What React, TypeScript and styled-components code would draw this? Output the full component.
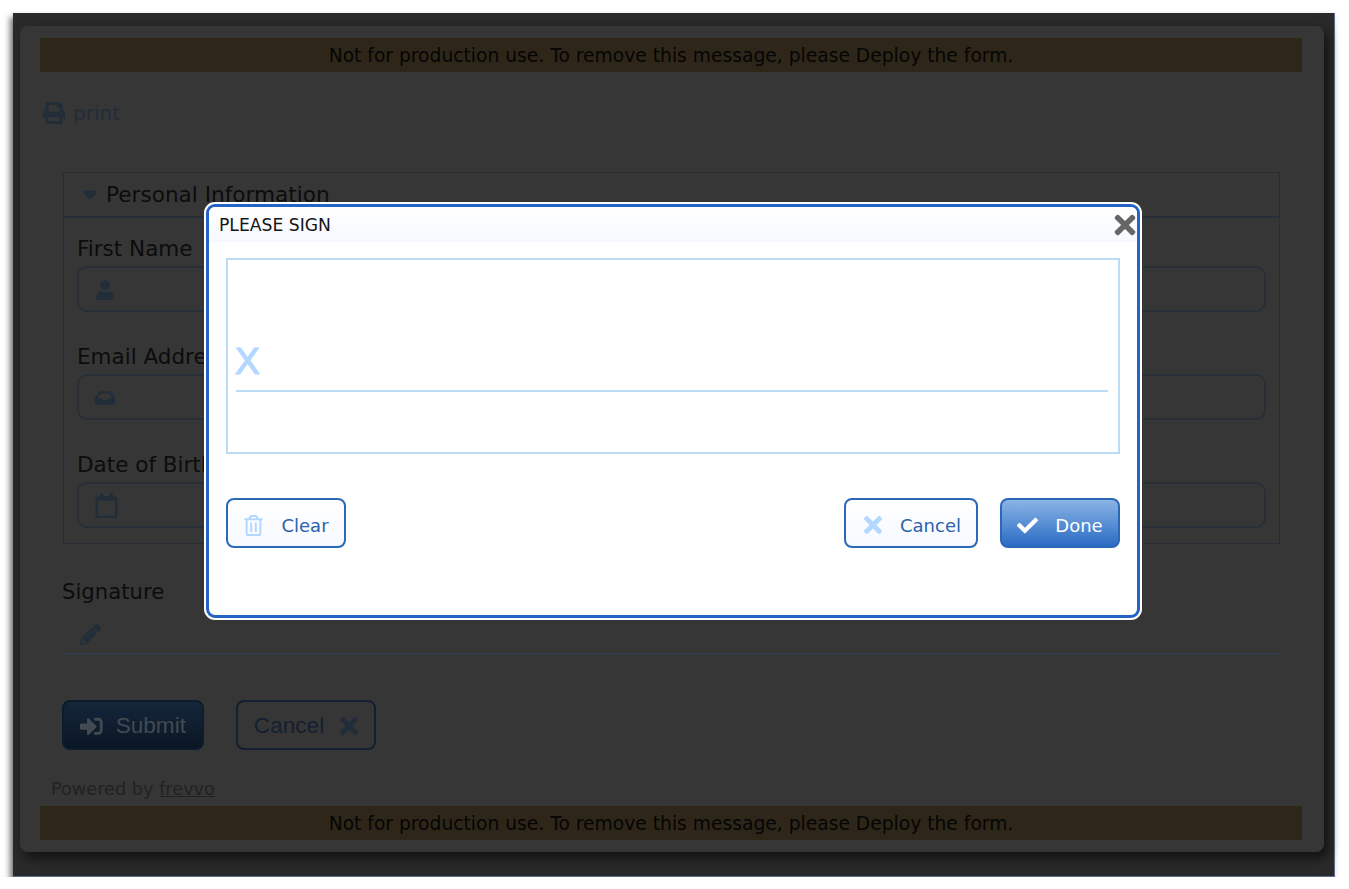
import React from "react";
import styled, { createGlobalStyle } from "styled-components";
import {
  FaCaretDown,
  FaCheck,
  FaInbox,
  FaPencilAlt,
  FaPrint,
  FaRegCalendar,
  FaRegTrashAlt,
  FaSignInAlt,
  FaTimes,
  FaUser,
} from "react-icons/fa";

const UI_FONT = `"DejaVu Sans", "Noto Sans", sans-serif`;
const ARIAL = `"Liberation Sans", Arial, sans-serif`;

const GlobalStyle = createGlobalStyle`
  html, body {
    margin: 0;
    background: #fff;
    font-family: ${UI_FONT};
  }
`;

const S = {
  Window: styled.div`
    position: relative;
    box-sizing: border-box;
    width: 1322px;
    height: 864px;
    margin: 13px 0 0 13px;
    padding: 13px 10px 25px 7px;
    background: #2a2a2a;
    border-right: 1px solid #5b6f8c;
    border-bottom: 1px solid #5b6f8c;
    box-shadow: -3px 4px 6px rgba(0, 0, 0, 0.55);
  `,
  Card: styled.div`
    box-sizing: border-box;
    height: 826px;
    padding: 12px 22px 12px 20px;
    background: #363636;
    border-radius: 8px;
    box-shadow: 4px 6px 12px rgba(0, 0, 0, 0.6);
    display: flex;
    flex-direction: column;
  `,
  Banner: styled.div`
    flex: 0 0 34px;
    display: flex;
    align-items: center;
    justify-content: center;
    background: #2e2719;
    color: #050505;
    font-size: 18.7px;
  `,
  PrintLink: styled.div`
    display: flex;
    align-items: center;
    gap: 8px;
    height: 30px;
    margin: 26px 0 0 3px;
    color: #222d3a;
    font-size: 20px;
    svg {
      font-size: 22px;
    }
  `,
  Section: styled.div`
    box-sizing: border-box;
    height: 373px;
    margin: 44px 22px 0 23px;
    border: 1px solid #262d35;
  `,
  SectionHead: styled.div`
    display: flex;
    align-items: center;
    gap: 8px;
    height: 43px;
    padding-left: 18px;
    border-bottom: 2px solid #282e35;
    color: #0c0c0c;
    font-size: 21.6px;
    svg {
      margin: 0 -5px;
      color: #222d3a;
      font-size: 26px;
    }
  `,
  SectionBody: styled.div`
    padding: 16px 13px 0 13px;
    display: flex;
    flex-direction: column;
    gap: 30px;
  `,
  Field: styled.div`
    display: flex;
    flex-direction: column;
    gap: 4px;
  `,
  Label: styled.label`
    height: 28px;
    line-height: 30px;
    color: #0c0c0c;
    font-size: 21.5px;
  `,
  Input: styled.div<{ $iconSize: number }>`
    box-sizing: border-box;
    height: 46px;
    padding: 2px 0 0 ${({ $iconSize }) => 21 - $iconSize * 0.25}px;
    display: flex;
    align-items: center;
    border: 2px solid #282f37;
    border-radius: 10px;
    color: #222d3a;
    font-size: ${({ $iconSize }) => $iconSize}px;
  `,
  Signature: styled.div`
    margin: 33px 22px 0 22px;
  `,
  SignatureLabel: styled.div`
    height: 30px;
    line-height: 30px;
    color: #0c0c0c;
    font-size: 21.2px;
  `,
  SignatureLine: styled.div`
    box-sizing: border-box;
    height: 47px;
    padding: 8px 0 0 18px;
    display: flex;
    align-items: center;
    border-bottom: 1px solid #2f4255;
    color: #222d3a;
    font-size: 21px;
  `,
  Actions: styled.div`
    display: flex;
    gap: 32px;
    margin: 46px 0 0 22px;
  `,
  SubmitButton: styled.div`
    box-sizing: border-box;
    width: 142px;
    height: 50px;
    padding-top: 2px;
    display: flex;
    align-items: center;
    justify-content: center;
    gap: 13px;
    border: 2px solid #0d1c2c;
    border-radius: 8px;
    background: linear-gradient(#15263a, #0a1624);
    color: #444a52;
    font-family: ${ARIAL};
    font-size: 22.6px;
  `,
  CancelButton: styled.div`
    box-sizing: border-box;
    width: 140px;
    height: 50px;
    padding: 2px 0 0 4px;
    display: flex;
    align-items: center;
    justify-content: center;
    gap: 12px;
    border: 2px solid #141f30;
    border-radius: 8px;
    color: #141f30;
    font-family: ${ARIAL};
    font-size: 22.6px;
    svg {
      color: #222d3a;
      font-size: 26px;
    }
  `,
  Powered: styled.div`
    height: 22px;
    margin: 28px 0 6px 11px;
    line-height: 22px;
    color: #222;
    font-size: 17.7px;
    a {
      color: inherit;
      text-decoration: underline;
    }
  `,
  Dialog: styled.div`
    position: absolute;
    left: 193px;
    top: 191px;
    box-sizing: border-box;
    width: 934px;
    height: 414px;
    background: #fff;
    border: 3px solid #2563c4;
    border-radius: 9px;
    box-shadow: 0 0 0 2px #fff;
    display: flex;
    flex-direction: column;
  `,
  TitleBar: styled.div`
    flex: 0 0 35px;
    box-sizing: border-box;
    position: relative;
    display: flex;
    align-items: center;
    padding: 1px 0 0 10px;
    background: linear-gradient(#fff, #f5f8fe);
    border-radius: 6px 6px 0 0;
    color: #151515;
    font-size: 17.2px;
  `,
  CloseIcon: styled.div`
    position: absolute;
    right: -3px;
    top: 3px;
    display: flex;
    color: #666;
    font-size: 30px;
  `,
  DialogBody: styled.div`
    padding: 16px 17px 0 17px;
    display: flex;
    flex-direction: column;
  `,
  Pad: styled.div`
    box-sizing: border-box;
    height: 196px;
    padding: 0 10px 0 8px;
    border: 2px solid #bcdcf6;
  `,
  PadMark: styled.div`
    box-sizing: border-box;
    height: 132px;
    padding-bottom: 3px;
    display: flex;
    align-items: flex-end;
    border-bottom: 2px solid #bcdcf6;
    color: #b3d7ff;
    font-family: ${ARIAL};
    font-size: 37px;
    line-height: 50px;
    -webkit-text-stroke: 1.2px #b3d7ff;
    text-indent: -1px;
  `,
  DialogActions: styled.div`
    display: flex;
    margin-top: 44px;
    gap: 22px;
  `,
  DialogButton: styled.div<{ $width: number; $primary?: boolean; $push?: boolean }>`
    box-sizing: border-box;
    width: ${({ $width }) => $width}px;
    height: 50px;
    margin-left: ${({ $push }) => ($push ? "auto" : "0")};
    padding-top: 4px;
    display: flex;
    align-items: center;
    justify-content: center;
    gap: 17px;
    border: 2px solid #2b68b5;
    border-radius: 8px;
    background: ${({ $primary }) =>
      $primary
        ? "linear-gradient(#8ab4e6, #2b6cc4)"
        : "linear-gradient(#fff, #f6f9ff)"};
    color: ${({ $primary }) => ($primary ? "#fff" : "#2b62ad")};
    font-size: 18px;
    svg {
      color: ${({ $primary }) => ($primary ? "#fff" : "#b3d7ff")};
      font-size: 21px;
    }
  `,
  CrossIcon: styled(FaTimes)`
    && {
      font-size: 26px;
      margin: 0 -3px 0 -1px;
    }
  `,
};

const NOTICE = "Not for production use. To remove this message, please Deploy the form.";

const FIELDS = [
  { label: "First Name", icon: <FaUser />, iconSize: 20 },
  { label: "Email Address", icon: <FaInbox />, iconSize: 20 },
  { label: "Date of Birth", icon: <FaRegCalendar />, iconSize: 25 },
];

const App: React.FC = () => {
  return (
    <>
      <GlobalStyle />
      <S.Window>
        <S.Card>
          <S.Banner>{NOTICE}</S.Banner>
          <S.PrintLink>
            <FaPrint />
            print
          </S.PrintLink>
          <S.Section>
            <S.SectionHead>
              <FaCaretDown />
              Personal Information
            </S.SectionHead>
            <S.SectionBody>
              {FIELDS.map((field) => (
                <S.Field key={field.label}>
                  <S.Label>{field.label}</S.Label>
                  <S.Input $iconSize={field.iconSize}>{field.icon}</S.Input>
                </S.Field>
              ))}
            </S.SectionBody>
          </S.Section>
          <S.Signature>
            <S.SignatureLabel>Signature</S.SignatureLabel>
            <S.SignatureLine>
              <FaPencilAlt />
            </S.SignatureLine>
          </S.Signature>
          <S.Actions>
            <S.SubmitButton>
              <FaSignInAlt />
              Submit
            </S.SubmitButton>
            <S.CancelButton>
              Cancel
              <FaTimes />
            </S.CancelButton>
          </S.Actions>
          <S.Powered>
            Powered by <a>frevvo</a>
          </S.Powered>
          <S.Banner>{NOTICE}</S.Banner>
        </S.Card>

        <S.Dialog>
          <S.TitleBar>
            PLEASE SIGN
            <S.CloseIcon>
              <FaTimes />
            </S.CloseIcon>
          </S.TitleBar>
          <S.DialogBody>
            <S.Pad>
              <S.PadMark>X</S.PadMark>
            </S.Pad>
            <S.DialogActions>
              <S.DialogButton $width={120}>
                <FaRegTrashAlt />
                Clear
              </S.DialogButton>
              <S.DialogButton $width={134} $push>
                <S.CrossIcon />
                Cancel
              </S.DialogButton>
              <S.DialogButton $width={120} $primary>
                <FaCheck />
                Done
              </S.DialogButton>
            </S.DialogActions>
          </S.DialogBody>
        </S.Dialog>
      </S.Window>
    </>
  );
};

export default App;
